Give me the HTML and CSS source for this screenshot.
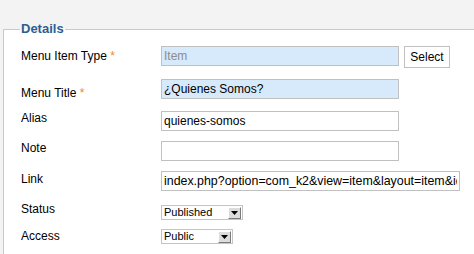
FILE: index.html
```html
<!DOCTYPE html>
<html>
<head>
<meta charset="utf-8">
<link rel="stylesheet" href="styles.css">
</head>
<body>
<fieldset class="details">
  <legend class="details-legend">Details</legend>
  <div class="form-row row-first">
    <label class="form-label label-low">Menu Item Type<span class="star"> *</span></label>
    <input class="field field-blue field-muted" value="Item" readonly>
    <button class="btn-select" type="button">Select</button>
  </div>
  <div class="form-row">
    <label class="form-label label-lower">Menu Title<span class="star"> *</span></label>
    <input class="field field-blue" value="¿Quienes Somos?">
  </div>
  <div class="form-row">
    <label class="form-label">Alias</label>
    <input class="field" value="quienes-somos">
  </div>
  <div class="form-row">
    <label class="form-label">Note</label>
    <input class="field" value="">
  </div>
  <div class="form-row row-link">
    <label class="form-label label-flat">Link</label>
    <input class="field field-wide" value="index.php?option=com_k2&amp;view=item&amp;layout=item&amp;id=1">
  </div>
  <div class="form-row row-status">
    <label class="form-label label-high">Status</label>
    <div class="dropdown dropdown-status">
      <span class="dropdown-text">Published</span>
      <span class="dropdown-arrow"><svg width="7" height="4" viewBox="0 0 7 4"><path d="M0 0h7L3.5 4z" fill="#000"/></svg></span>
    </div>
  </div>
  <div class="form-row row-last">
    <label class="form-label">Access</label>
    <div class="dropdown dropdown-access">
      <span class="dropdown-text">Public</span>
      <span class="dropdown-arrow"><svg width="7" height="4" viewBox="0 0 7 4"><path d="M0 0h7L3.5 4z" fill="#000"/></svg></span>
    </div>
  </div>
</fieldset>
</body>
</html>
```
FILE: styles.css
```css
html, body {
  margin: 0;
  padding: 0;
  overflow: hidden;
  background: #f3f3f3;
  font-family: "Liberation Sans", Arial, Helvetica, sans-serif;
  font-size: 12px;
  color: #000;
}

.details {
  box-sizing: border-box;
  margin: 21px 0 0 3px;
  width: calc(100% - 3px);
  min-height: 233px;
  padding: 0 0 0 17px;
  border: 1px solid #c9c9c9;
  border-right: 0;
  border-bottom: 0;
  background: #fff;
}

.details-legend {
  font-size: 13px;
  font-weight: bold;
  line-height: 16px;
  color: #2b5e92;
  padding: 0 1px;
  margin-left: -1px;
}

.form-row {
  display: flex;
  align-items: flex-start;
  margin-bottom: 10px;
}

.row-first {
  margin-top: 9px;
  margin-bottom: 11px;
}

.row-link {
  margin-bottom: 14px;
}

.row-status {
  margin-bottom: 9px;
}

.row-last {
  margin-bottom: 0;
}

.form-label {
  width: 140px;
  flex: none;
  line-height: 16px;
  margin-top: -1px;
}

.label-low { margin-top: 2px; }
.label-lower { margin-top: 6px; }
.label-flat { margin-top: 0; }
.label-high { margin-top: -4px; }

.star {
  color: #f08c1a;
}

.field {
  box-sizing: border-box;
  width: 238px;
  height: 20px;
  margin: 0;
  padding: 0 2px;
  border: 1px solid #c0c0c0;
  background: #fff;
  font-family: "Liberation Sans", Arial, sans-serif;
  font-size: 12px;
  color: #000;
  outline: none;
}

.field-blue {
  background: #d6eafc;
}

.field-muted {
  color: #8c8c8c;
}

.field-wide {
  width: 299px;
  font-size: 12.4px;
}

.btn-select {
  box-sizing: border-box;
  height: 22px;
  width: 46px;
  margin: 0 0 0 5px;
  padding: 0;
  border: 1px solid #c0c0c0;
  background: #fff;
  font-family: "Liberation Sans", Arial, sans-serif;
  font-size: 12px;
  color: #000;
}

.dropdown {
  box-sizing: border-box;
  height: 15px;
  display: flex;
  align-items: center;
  border: 1px solid #c4c4c4;
  background: #fff;
  padding: 0 1px 0 2px;
}

.dropdown-status { width: 82px; }
.dropdown-access { width: 72px; }

.dropdown-text {
  flex: 1;
  font-size: 11px;
  line-height: 13px;
}

.dropdown-arrow {
  box-sizing: border-box;
  width: 13px;
  height: 12px;
  display: flex;
  align-items: center;
  justify-content: center;
  background: #dcdcdc;
  border: 1px solid;
  border-color: #fff #7a7a7a #7a7a7a #fff;
}
```
